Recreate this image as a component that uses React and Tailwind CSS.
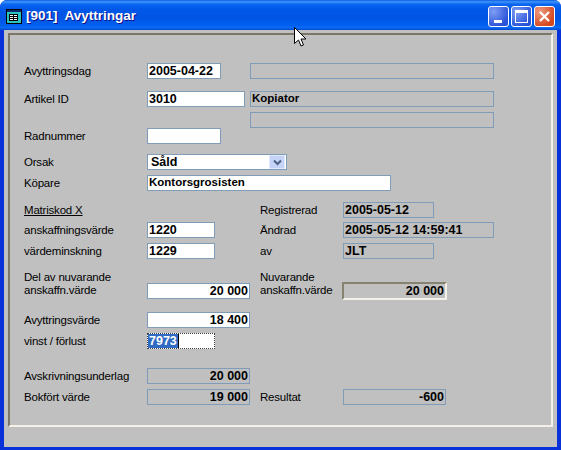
const Label = ({ children, className = "w-[123px]" }) => (
  <div className={`${className} shrink-0 text-[11.5px] tracking-[-0.2px] leading-[13px] text-black`}>{children}</div>
);

const Input = ({ className = "", right, children }) => (
  <div className={`${className} h-[16px] shrink-0 border border-[#7f9db9] bg-white flex items-center px-[1px] text-[12.5px] font-bold text-black leading-none overflow-hidden ${right ? "justify-end" : ""}`}>
    {children}
  </div>
);

const Ro = ({ className = "", right, children }) => (
  <div className={`${className} h-[16px] shrink-0 border border-[#7f9db9] flex items-center px-[1px] text-[12.5px] font-bold text-black leading-none overflow-hidden ${right ? "justify-end" : ""}`}>
    {children}
  </div>
);

const Row = ({ className = "", children }) => (
  <div className={`flex items-center h-[16px] ${className}`}>{children}</div>
);

const WinBtn = ({ className, children }) => (
  <div className={`${className} w-[21px] h-[21px] rounded-[3px] border border-white flex items-center justify-center`}>
    {children}
  </div>
);

export default function App() {
  return (
    <div className="relative w-[561px] h-[450px] flex flex-col overflow-hidden rounded-t-[7px] bg-[#0831d9] font-['Liberation_Sans',sans-serif]">
      <div className="h-[30px] pt-[2px] shrink-0 flex items-center bg-[linear-gradient(180deg,#0a5be0_0%,#3f94fb_6%,#0a66f0_14%,#0058e8_30%,#0054e3_60%,#0060f0_85%,#0a6cf5_92%,#0048d0_100%)]">
        <svg className="ml-[6px] shrink-0" width="16" height="15" viewBox="0 0 16 15">
          <rect x="0.5" y="0.5" width="15" height="14" fill="#2cc4c0" stroke="#000" />
          <rect x="1" y="1" width="14" height="2" fill="#0a2a6a" />
          <rect x="3" y="5" width="9" height="7" fill="#000" />
          <path d="M4 6h3v1H4zM8 6h3v1H8zM4 8h3v1H4zM8 8h3v1H8zM4 10h3v1H4zM8 10h3v1H8z" fill="#fff" />
        </svg>
        <div className="ml-[4px] whitespace-pre text-[13.5px] font-bold text-white [text-shadow:1px_1px_#0f1089]">[901]  Avyttringar</div>
        <div className="ml-auto mr-[6px] flex gap-[2px]">
          <WinBtn className="items-end bg-[radial-gradient(circle_at_25%_25%,#7f9df5,#2a54d8_75%)]">
            <div className="w-[8px] h-[3px] bg-white mb-[3px] mr-[2px]" />
          </WinBtn>
          <WinBtn className="bg-[radial-gradient(circle_at_25%_25%,#7f9df5,#2a54d8_75%)]">
            <div className="w-[13px] h-[13px] border border-white border-t-[3px]" />
          </WinBtn>
          <WinBtn className="bg-[radial-gradient(circle_at_25%_25%,#ee9a80,#d4481f_75%)]">
            <svg width="13" height="13" viewBox="0 0 13 13">
              <path d="M2 2l9 9M11 2l-9 9" stroke="#fff" strokeWidth="2.2" fill="none" />
            </svg>
          </WinBtn>
        </div>
      </div>

      <div className="flex-1 flex mx-[4px] mb-[3px] bg-[#c0c0c0] px-[4px] pt-[3px] pb-[20px]">
        <div className="flex-1 flex flex-col border-2 border-t-[#7c7668] border-l-[#7c7668] border-r-[#f4f2e8] border-b-[#f4f2e8] pl-[14px] pt-[28px]">
          <Row>
            <Label>Avyttringsdag</Label>
            <Input className="w-[74px]">2005-04-22</Input>
            <Ro className="w-[244px] ml-[29px]" />
          </Row>
          <Row className="mt-[12px]">
            <Label>Artikel ID</Label>
            <Input className="w-[98px]">3010</Input>
            <Ro className="w-[244px] ml-[5px]"><span className="text-[11.5px]">Kopiator</span></Ro>
          </Row>
          <Row className="mt-[5px] pl-[226px]">
            <Ro className="w-[244px]" />
          </Row>
          <Row>
            <Label>Radnummer</Label>
            <Input className="w-[74px]" />
          </Row>
          <Row className="mt-[10px]">
            <Label>Orsak</Label>
            <div className="w-[140px] h-[16px] shrink-0 border border-[#7f9db9] bg-white flex items-center">
              <div className="flex-1 pl-[3px] text-[12.5px] font-bold leading-none text-black">Såld</div>
              <div className="w-[16px] h-[14px] mr-[1px] rounded-[1px] bg-[#c5d3f8] border border-[#e0e8fe] flex items-center justify-center">
                <svg width="9" height="7" viewBox="0 0 9 7">
                  <path d="M1 1.5l3.5 3.5L8 1.5" stroke="#4d6185" strokeWidth="2" fill="none" />
                </svg>
              </div>
            </div>
          </Row>
          <Row className="mt-[5px]">
            <Label>Köpare</Label>
            <Input className="w-[244px]"><span className="text-[11.5px]">Kontorsgrosisten</span></Input>
          </Row>
          <Row className="mt-[11px]">
            <Label><span className="underline">Matriskod X</span></Label>
            <div className="w-[196px] shrink-0 pl-[113px] flex items-center">
              <Label className="w-[83px]">Registrerad</Label>
            </div>
            <Ro className="w-[91px]">2005-05-12</Ro>
          </Row>
          <Row className="mt-[4px]">
            <Label>anskaffningsvärde</Label>
            <Input className="w-[68px]">1220</Input>
            <Label className="w-[83px] ml-[45px]">Ändrad</Label>
            <Ro className="w-[151px]">2005-05-12 14:59:41</Ro>
          </Row>
          <Row className="mt-[5px]">
            <Label>värdeminskning</Label>
            <Input className="w-[68px]">1229</Input>
            <Label className="w-[83px] ml-[45px]">av</Label>
            <Ro className="w-[91px]">JLT</Ro>
          </Row>
          <div className="flex items-end h-[28px] mt-[12px]">
            <Label className="w-[123px] mb-[2px]">Del av nuvarande<br />anskaffn.värde</Label>
            <Input className="w-[103px]" right>20 000</Input>
            <Label className="w-[82px] ml-[10px] mb-[2px]">Nuvarande<br />anskaffn.värde</Label>
            <div className="w-[105px] h-[18px] -mb-[1px] shrink-0 border-2 border-t-[#85826f] border-l-[#85826f] border-r-[#f4f2e8] border-b-[#f4f2e8] bg-[#c0c0c0] flex items-center justify-end pr-[1px] text-[12.5px] font-bold leading-none text-black">20 000</div>
          </div>
          <Row className="mt-[13px]">
            <Label>Avyttringsvärde</Label>
            <Input className="w-[103px]" right>18 400</Input>
          </Row>
          <Row className="mt-[5px]">
            <Label>vinst / förlust</Label>
            <div className="w-[68px] h-[16px] shrink-0 border border-dotted border-[#404040] bg-white flex items-center text-[12.5px] font-bold leading-none">
              <span className="bg-[#316ac5] text-white px-[1px] h-[14px] flex items-center border-r border-r-black">7973</span>
            </div>
          </Row>
          <Row className="mt-[19px]">
            <Label>Avskrivningsunderlag</Label>
            <Ro className="w-[103px]" right>20 000</Ro>
          </Row>
          <Row className="mt-[5px]">
            <Label>Bokfört värde</Label>
            <Ro className="w-[103px]" right>19 000</Ro>
            <Label className="w-[83px] ml-[10px]">Resultat</Label>
            <Ro className="w-[103px]" right>-600</Ro>
          </Row>
        </div>
      </div>

      <svg className="absolute left-[294px] top-[27px]" width="13" height="21" viewBox="0 0 13 21">
        <path d="M0.5 0.5v16l4-3.5 2.5 6 2.5-1-2.5-6h5z" fill="#fff" stroke="#000" strokeWidth="1" />
      </svg>
    </div>
  );
}
